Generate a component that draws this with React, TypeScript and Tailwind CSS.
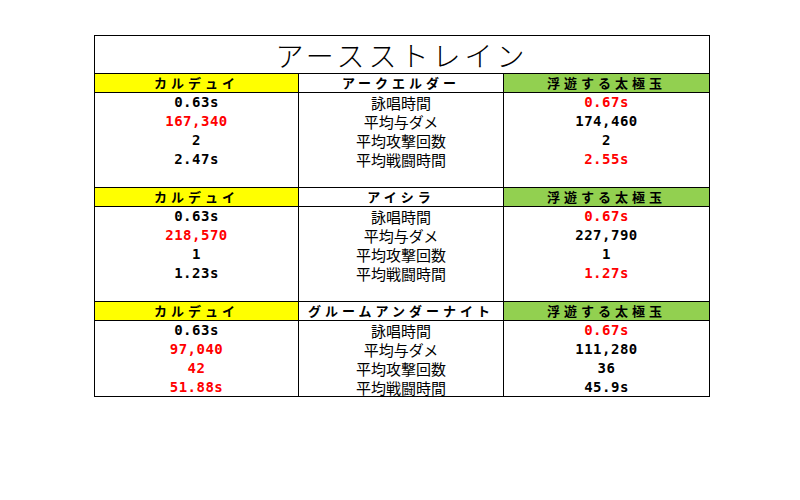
import React from "react";

type Line = { text: string; red?: boolean };
type Section = {
  left: string;
  mid: string;
  right: string;
  a: Line[];
  b: Line[];
  dataH: string;
};

const labels = ["詠唱時間", "平均与ダメ", "平均攻撃回数", "平均戦闘時間"];

const sections: Section[] = [
  {
    left: "カルデュイ",
    mid: "アークエルダー",
    right: "浮遊する太極玉",
    a: [{ text: "0.63s" }, { text: "167,340", red: true }, { text: "2" }, { text: "2.47s" }],
    b: [{ text: "0.67s", red: true }, { text: "174,460" }, { text: "2" }, { text: "2.55s", red: true }],
    dataH: "h-[94px]",
  },
  {
    left: "カルデュイ",
    mid: "アイシラ",
    right: "浮遊する太極玉",
    a: [{ text: "0.63s" }, { text: "218,570", red: true }, { text: "1" }, { text: "1.23s" }],
    b: [{ text: "0.67s", red: true }, { text: "227,790" }, { text: "1" }, { text: "1.27s", red: true }],
    dataH: "h-[94px]",
  },
  {
    left: "カルデュイ",
    mid: "グルームアンダーナイト",
    right: "浮遊する太極玉",
    a: [{ text: "0.63s" }, { text: "97,040", red: true }, { text: "42", red: true }, { text: "51.88s", red: true }],
    b: [{ text: "0.67s", red: true }, { text: "111,280" }, { text: "36" }, { text: "45.9s" }],
    dataH: "h-[75px]",
  },
];

const jp = { fontFamily: '"Noto Sans CJK JP", "Noto Sans", sans-serif' };
const mono = { fontFamily: '"DejaVu Sans Mono", "Liberation Mono", "Noto Sans CJK JP", monospace' };

function NumCol({ lines, h }: { lines: Line[]; h: string }) {
  return (
    <div className={`${h} flex flex-col items-center`}>
      {lines.map((l, i) => (
        <div
          key={i}
          className={`h-[19px] leading-[19px] text-[14px] font-bold tracking-[0.5px] ${l.red ? "text-[#ff0000]" : "text-black"}`}
          style={mono}
        >
          {l.text}
        </div>
      ))}
    </div>
  );
}

export default function App() {
  return (
    <div className="w-[800px] h-[500px] bg-white overflow-hidden">
      <div className="ml-[94px] mt-[35px] w-[616px] border border-black">
        <div
          className="h-[37px] flex items-center justify-center text-[28px] leading-none tracking-[4px] font-light text-black"
          style={jp}
        >
          アースストレイン
        </div>
        {sections.map((s, si) => (
          <div key={si} className="border-t border-black grid grid-cols-[204px_205px_205px]">
            <div className="border-r border-black">
              <div
                className="h-[19px] bg-[#ffff00] border-b border-black flex items-center justify-center text-[13px] font-bold tracking-[4px] text-black"
                style={jp}
              >
                {s.left}
              </div>
              <NumCol lines={s.a} h={s.dataH} />
            </div>
            <div className="border-r border-black">
              <div
                className="h-[19px] border-b border-black flex items-center justify-center text-[13px] font-bold tracking-[4px] text-black"
                style={jp}
              >
                {s.mid}
              </div>
              <div className={`${s.dataH} flex flex-col items-center`}>
                {labels.map((t, i) => (
                  <div key={i} className="h-[19px] leading-[19px] text-[15px] text-black" style={jp}>
                    {t}
                  </div>
                ))}
              </div>
            </div>
            <div>
              <div
                className="h-[19px] bg-[#92d050] border-b border-black flex items-center justify-center text-[13px] font-bold tracking-[4px] text-black"
                style={jp}
              >
                {s.right}
              </div>
              <NumCol lines={s.b} h={s.dataH} />
            </div>
          </div>
        ))}
      </div>
    </div>
  );
}
